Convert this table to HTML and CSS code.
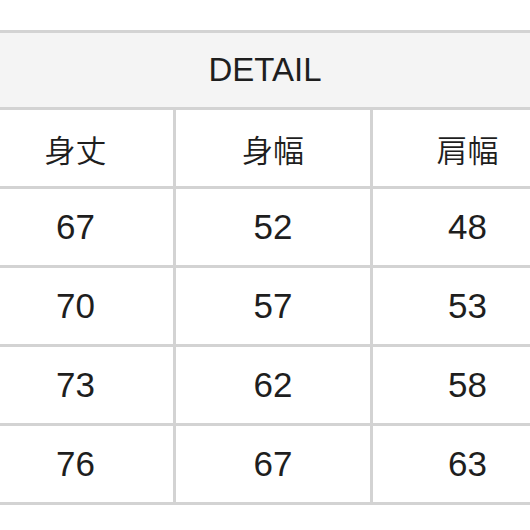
FILE: index.html
```html
<!DOCTYPE html>
<html lang="ja">
<head>
<meta charset="utf-8">
<link rel="stylesheet" href="styles.css">
</head>
<body>
<div class="page">
  <div class="grid">
    <div class="cell head">DETAIL</div>
    <div class="cell jp">身丈</div>
    <div class="cell jp">身幅</div>
    <div class="cell jp">肩幅</div>
    <div class="cell">67</div>
    <div class="cell">52</div>
    <div class="cell">48</div>
    <div class="cell">70</div>
    <div class="cell">57</div>
    <div class="cell">53</div>
    <div class="cell">73</div>
    <div class="cell">62</div>
    <div class="cell">58</div>
    <div class="cell">76</div>
    <div class="cell">67</div>
    <div class="cell">63</div>
  </div>
</div>
</body>
</html>
```
FILE: styles.css
```css
html, body {
  margin: 0;
  padding: 0;
  background: #ffffff;
}
.page {
  width: 530px;
  height: 530px;
  overflow: hidden;
  padding-top: 30px;
  box-sizing: border-box;
}
.grid {
  margin-left: -22px;
  width: 584px;
  display: grid;
  grid-template-columns: 195px 194px 189px;
  grid-template-rows: 74px repeat(5, 76px);
  gap: 3px;
  padding: 3px 0;
  background: #d3d3d3;
  font-family: "Liberation Sans", "Noto Sans CJK JP", sans-serif;
  color: #1e1e1e;
}
.cell {
  background: #ffffff;
  display: flex;
  align-items: center;
  justify-content: center;
  font-size: 35px;
}
.head {
  grid-column: 1 / 4;
  background: #f4f4f4;
  font-size: 33px;
  padding-right: 10px;
}
.jp {
  font-family: "Noto Sans CJK JP", sans-serif;
  font-size: 31px;
  font-weight: 350;
}
```
